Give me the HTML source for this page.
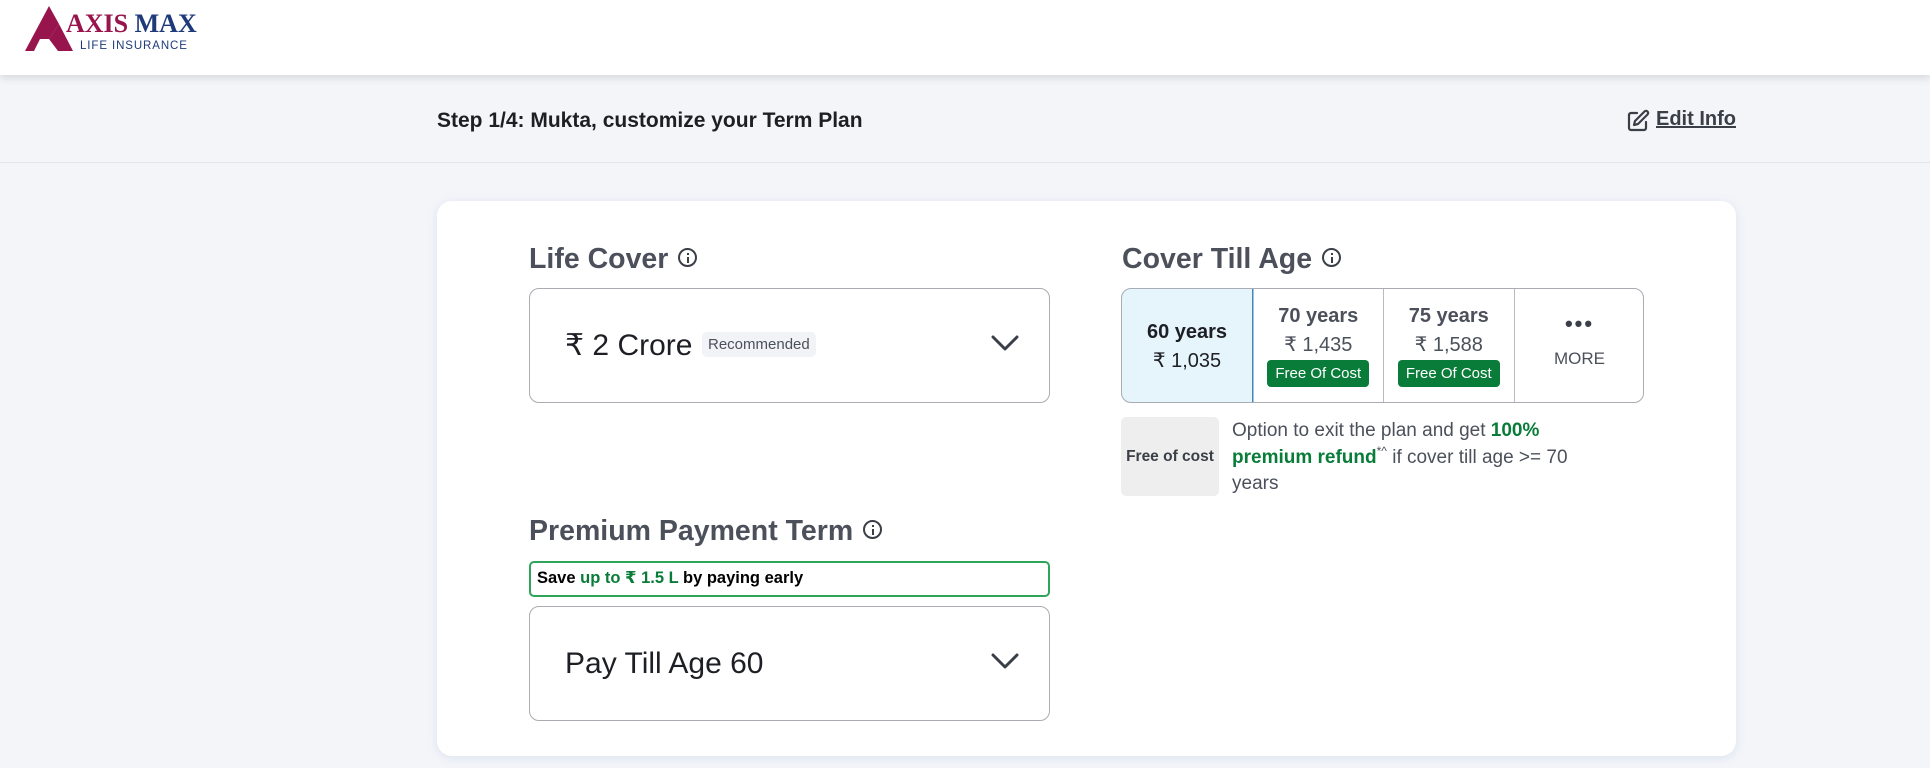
<!DOCTYPE html>
<html><head><meta charset="utf-8"><style>
*{box-sizing:border-box;margin:0;padding:0}
body{width:1930px;height:768px;overflow:hidden;background:#f3f5f9;font-family:"Liberation Sans","DejaVu Sans",sans-serif;position:relative;color:#1d1f24}
.a{position:absolute}
.hdr{left:0;top:0;width:1930px;height:75px;background:#fff;box-shadow:0 3px 8px rgba(0,0,0,.12);z-index:2}
.step{left:0;top:75px;width:1930px;height:88px;border-bottom:1px solid #e3e6ec}
.card{left:437px;top:201px;width:1299px;height:555px;background:#fff;border-radius:15px;box-shadow:0 2px 10px rgba(120,150,200,.18)}
.lbl{font-size:28.5px;font-weight:bold;color:#4b505b;white-space:nowrap}
.info{display:inline-block;width:19px;height:19px;border:2px solid #3a3e46;border-radius:50%;vertical-align:middle;position:relative;margin-left:10px;top:-3px}
.info:before{content:"";position:absolute;left:6.5px;top:7px;width:2px;height:6px;background:#3a3e46}
.info:after{content:"";position:absolute;left:6.5px;top:3px;width:2px;height:2px;background:#3a3e46}
.box{border:1px solid #a9acb2;border-radius:10px;background:#fff}
.cell{top:0;height:100%;width:130.5px;text-align:center;border-left:1px solid #b8bbc0}
.yr{font-size:20px;font-weight:bold;color:#4b505b}
.pr{font-size:20px;color:#4b505b}
.badge{display:inline-block;background:#0a7c3a;color:#fff;font-size:15px;padding:5px 8px;border-radius:4px;margin-top:3px}
</style></head><body>
<div class="a hdr">
<svg class="a" style="left:25px;top:6px" width="52" height="45" viewBox="0 0 52 45"><polygon points="0,45 24,0 34,18 24,33 15,33 9,45" fill="#97144d"/><polygon points="24,33 34,18 48,45 33,45" fill="#97144d"/></svg>
<div class="a" style="left:66px;top:9px;font-family:'Liberation Serif',serif;font-size:26px;font-weight:bold;white-space:nowrap"><span style="color:#97144d">AXIS</span> <span style="color:#1e3a7b">MAX</span></div>
<div class="a" style="left:80px;top:40px;font-size:11.5px;color:#1e3a7b;letter-spacing:.9px">LIFE INSURANCE</div>
</div>
<div class="a step">
<div class="a" style="left:437px;top:34px;font-size:21px;font-weight:bold;color:#1d1f24">Step 1/4: Mukta, customize your Term Plan</div>
<svg class="a" style="left:1626px;top:34px" width="24" height="24" viewBox="0 0 24 24" fill="none" stroke="#3a3e46" stroke-width="2.2" stroke-linecap="round" stroke-linejoin="round"><path d="M11 4H5a2 2 0 0 0-2 2v13a2 2 0 0 0 2 2h13a2 2 0 0 0 2-2v-6"/><path d="M18.5 2.5a2.1 2.1 0 0 1 3 3L12 15l-4 1 1-4z"/></svg>
<div class="a" style="left:1656px;top:33px;font-size:20px;font-weight:bold;color:#3a3e46;text-decoration:underline">Edit Info</div>
</div>
<div class="a card"></div>
<div class="a lbl" style="left:529px;top:243px">Life Cover<span class="info"></span></div>
<div class="a box" style="left:529px;top:288px;width:521px;height:115px">
<div class="a" style="left:35px;top:39px;font-size:30px;color:#1d1f24;white-space:nowrap">₹ 2 Crore</div>
<div class="a" style="left:172px;top:43px;background:#f1f3f7;border-radius:5px;padding:4px 6px;font-size:15px;color:#4b505b">Recommended</div>
<svg class="a" style="left:460px;top:44px" width="30" height="20" viewBox="0 0 30 20"><path d="M3 4l12 12L27 4" fill="none" stroke="#3a3e46" stroke-width="3" stroke-linecap="round" stroke-linejoin="round"/></svg>
</div>
<div class="a lbl" style="left:1122px;top:243px">Cover Till Age<span class="info"></span></div>
<div class="a box" style="left:1121px;top:288px;width:523px;height:115px;overflow:hidden">
<div class="a cell" style="border:1px solid #2a8fd6;border-radius:10px 0 0 10px;background:#e6f4fb;top:-1px;height:115px;left:-1px;width:132px"><div style="margin-top:32px" class="yr"><span style="color:#1d1f24">60 years</span></div><div class="pr" style="color:#1d1f24;margin-top:4px">₹ 1,035</div></div>
<div class="a cell" style="left:130.5px"><div style="margin-top:16px" class="yr">70 years</div><div class="pr" style="margin-top:4px">₹ 1,435</div><div class="badge">Free Of Cost</div></div>
<div class="a cell" style="left:261px"><div style="margin-top:16px" class="yr">75 years</div><div class="pr" style="margin-top:4px">₹ 1,588</div><div class="badge">Free Of Cost</div></div>
<div class="a cell" style="left:391.5px;width:131px"><div style="margin-top:22px;font-size:22px;font-weight:bold;color:#3a3e46;letter-spacing:2px">•••</div><div style="margin-top:12px;font-size:17px;color:#4b505b">MORE</div></div>
</div>
<div class="a" style="left:1121px;top:417px;width:98px;height:79px;background:#eeeeee;border-radius:5px;font-size:15.5px;font-weight:bold;color:#3a3e46;text-align:center;line-height:79px">Free of cost</div>
<div class="a" style="left:1232px;top:418px;width:370px;font-size:19px;line-height:26.5px;color:#4b505b">Option to exit the plan and get <b style="color:#0a7c3a">100%<br>premium refund</b><span style="font-size:12px;position:relative;top:-8px;line-height:0">*^</span> if cover till age &gt;= 70 years</div>
<div class="a lbl" style="left:529px;top:515px">Premium Payment Term<span class="info"></span></div>
<div class="a" style="left:529px;top:561px;width:521px;height:36px;border:2.5px solid #2ea55a;border-radius:5px;font-size:16.5px;font-weight:bold;color:#000;padding:5px 6px">Save <span style="color:#0a7c3a">up to ₹ 1.5 L</span> by paying early</div>
<div class="a box" style="left:529px;top:606px;width:521px;height:115px">
<div class="a" style="left:35px;top:40px;font-size:30px;color:#1d1f24;white-space:nowrap">Pay Till Age 60</div>
<svg class="a" style="left:460px;top:44px" width="30" height="20" viewBox="0 0 30 20"><path d="M3 4l12 12L27 4" fill="none" stroke="#3a3e46" stroke-width="3" stroke-linecap="round" stroke-linejoin="round"/></svg>
</div>
</body></html>
